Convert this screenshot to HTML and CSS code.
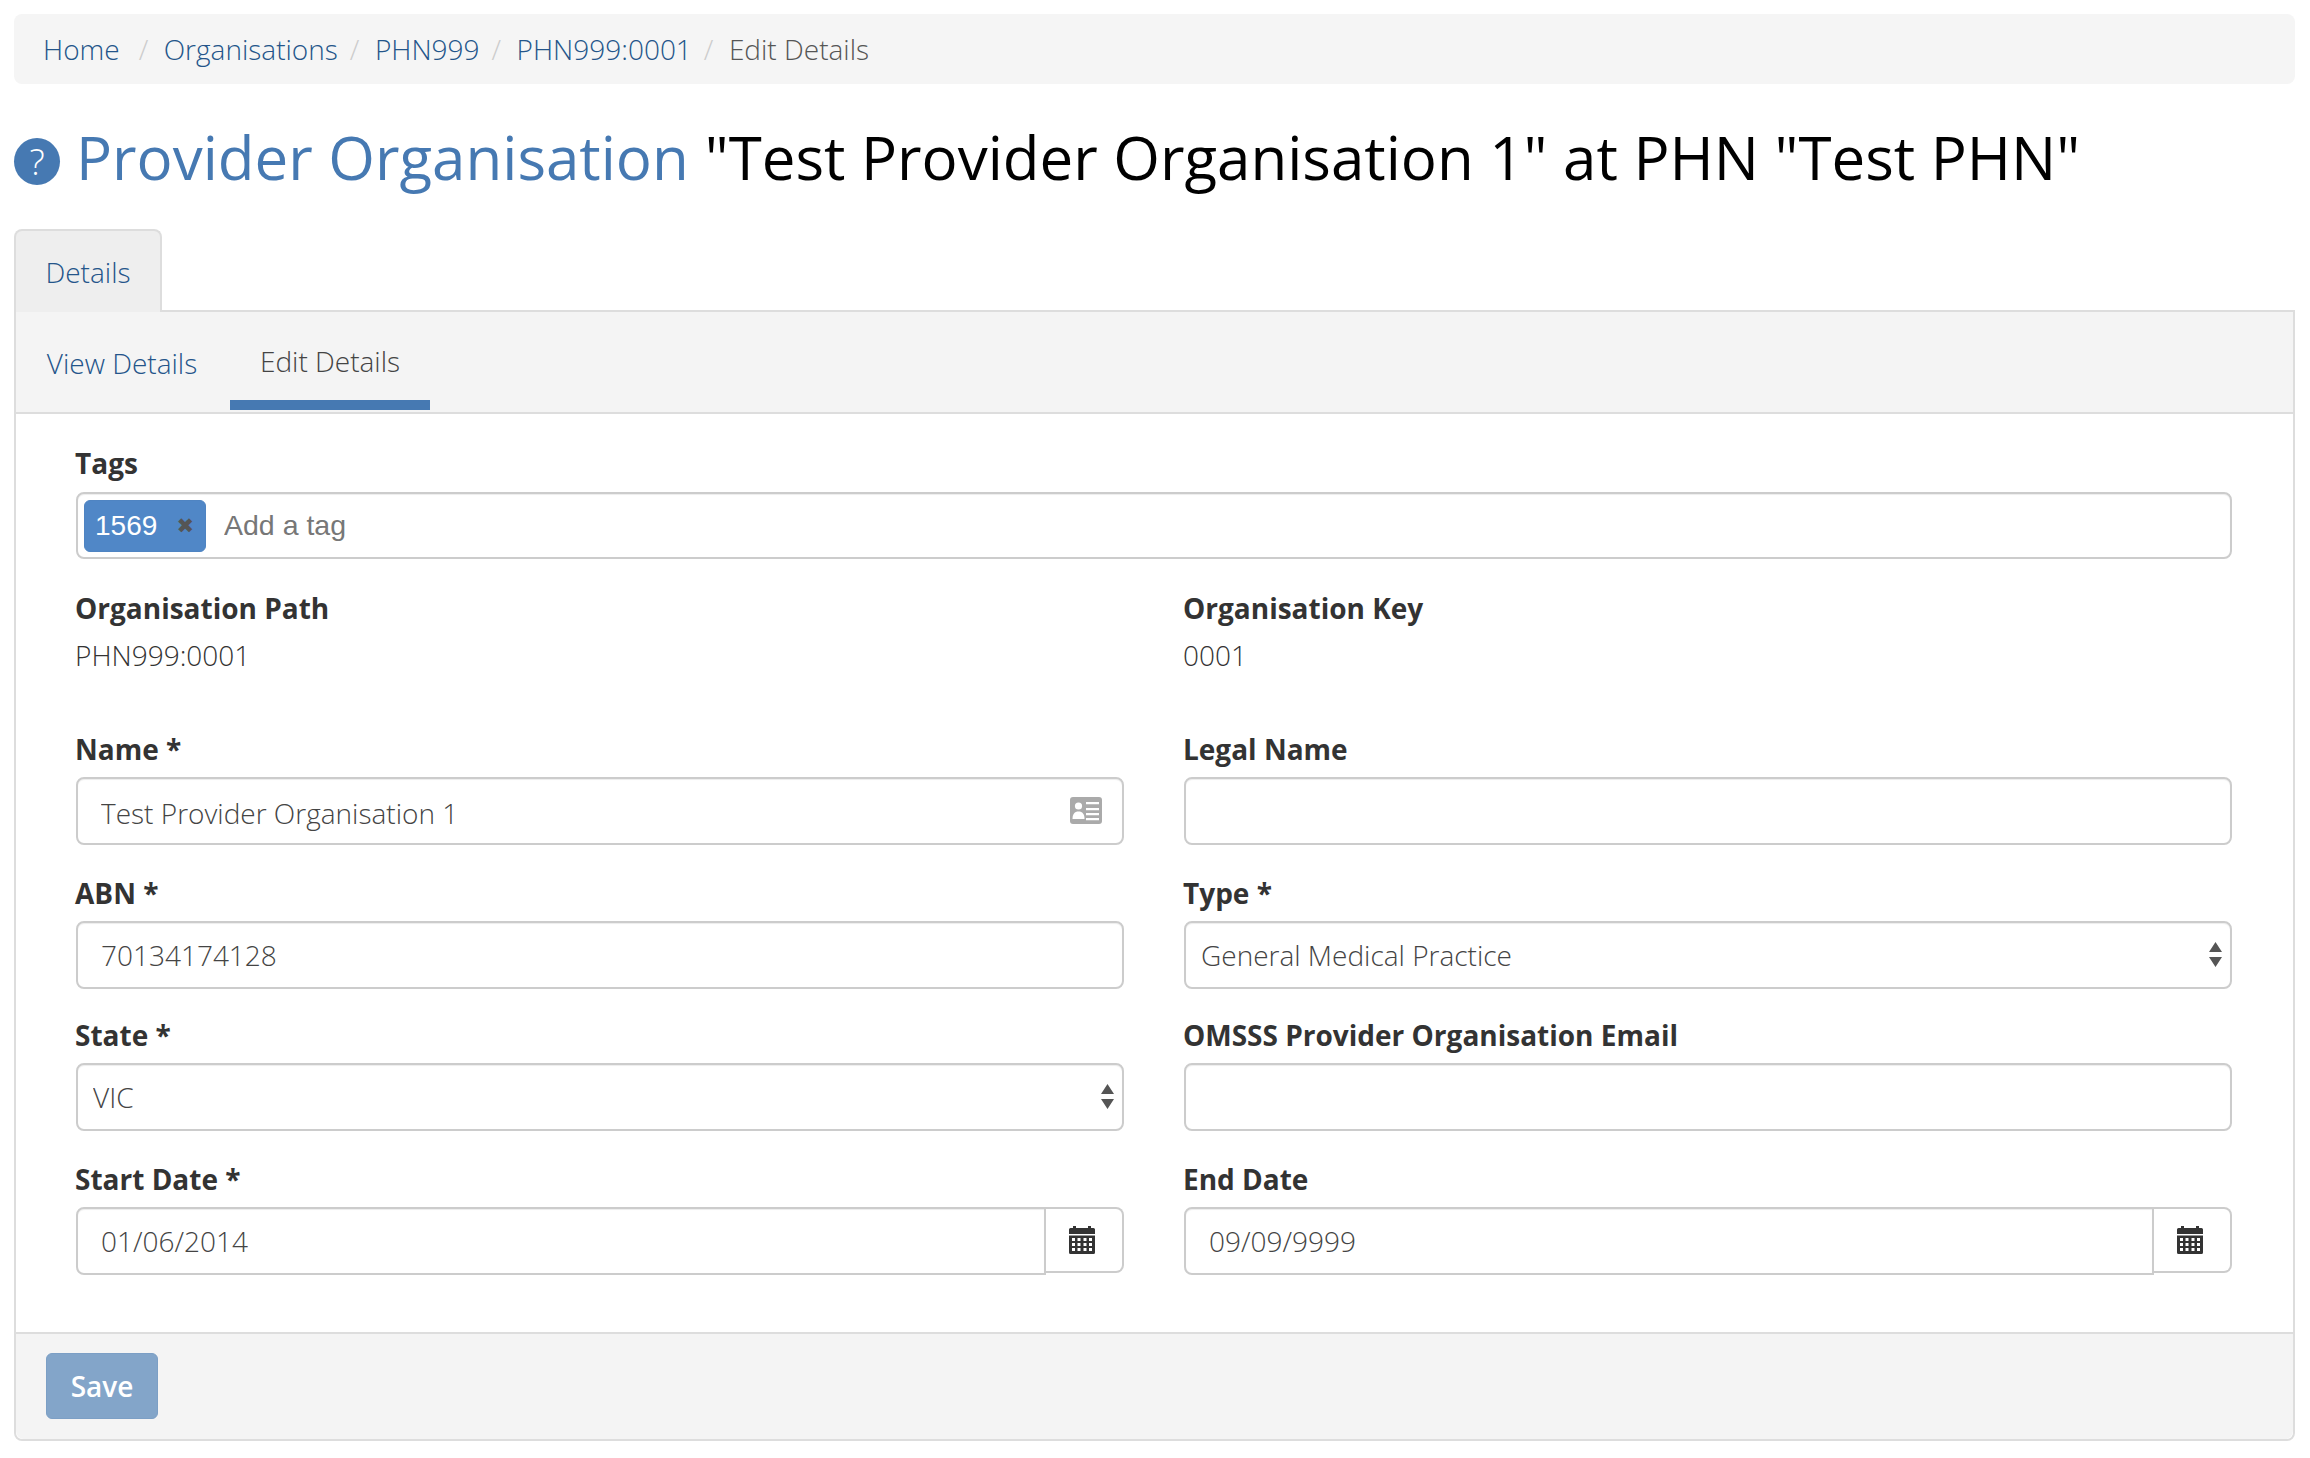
FILE: index.html
```html
<!DOCTYPE html>
<html lang="en">
<head>
  <meta charset="UTF-8">
  <title>Edit Details</title>
  <link rel="stylesheet" href="styles.css">
</head>
<body>
  <ol class="breadcrumb">
    <li class="first"><a href="#">Home</a></li>
    <li><a href="#">Organisations</a></li>
    <li><a href="#">PHN999</a></li>
    <li><a href="#">PHN999:0001</a></li>
    <li class="active">Edit Details</li>
  </ol>

  <h1 class="title">
    <span class="help">?</span>
    <a href="#">Provider Organisation</a>
    <span>"Test Provider Organisation 1" at PHN "Test PHN"</span>
  </h1>

  <div class="tabs">
    <a class="tab" href="#">Details</a>
  </div>

  <div class="panel">
    <div class="subnav">
      <a class="subnav-item" href="#">View Details</a>
      <a class="subnav-item current" href="#">Edit Details</a>
    </div>

    <form class="panel-body">
      <label class="label label-tags">Tags</label>
      <div class="tag-input">
        <span class="tag">1569 <span class="tag-x">&#10006;</span></span>
        <input class="tag-field" type="text" placeholder="Add a tag">
      </div>

      <div class="row row-static">
        <div>
          <label class="label">Organisation Path</label>
          <p class="static">PHN999:0001</p>
        </div>
        <div>
          <label class="label">Organisation Key</label>
          <p class="static">0001</p>
        </div>
      </div>

      <div class="row row-a">
        <div>
          <label class="label">Name *</label>
          <div class="control-wrap">
            <input class="control control-name" type="text" value="Test Provider Organisation 1">
            <svg class="card-icon" viewBox="0 0 32 27" width="32" height="27">
              <rect width="32" height="27" rx="3" fill="#aaa"/>
              <circle cx="8.5" cy="9" r="3.6" fill="#fff"/>
              <path d="M2.5 22c0-5 2-7.500 6-7.500s6 2.500 6 7.500z" fill="#fff"/>
              <path d="M16 5h13v2.200H16zM16 11h13v2.200H16zM16 16h13v2.200H16zM16 21h13v2.200H16z" fill="#fff"/>
            </svg>
          </div>
        </div>
        <div>
          <label class="label">Legal Name</label>
          <input class="control" type="text">
        </div>
      </div>

      <div class="row row-b">
        <div>
          <label class="label">ABN *</label>
          <input class="control" type="text" value="70134174128">
        </div>
        <div>
          <label class="label">Type *</label>
          <div class="control-wrap">
            <select class="control select">
              <option>General Medical Practice</option>
            </select>
            <svg class="select-arrows" viewBox="0 0 13 25" width="13" height="25">
              <path d="M6.500 0L13 10H0zM0 15h13L6.500 25z" fill="#555"/>
            </svg>
          </div>
        </div>
      </div>

      <div class="row row-c">
        <div>
          <label class="label">State *</label>
          <div class="control-wrap">
            <select class="control select">
              <option>VIC</option>
            </select>
            <svg class="select-arrows" viewBox="0 0 13 25" width="13" height="25">
              <path d="M6.500 0L13 10H0zM0 15h13L6.500 25z" fill="#555"/>
            </svg>
          </div>
        </div>
        <div>
          <label class="label">OMSSS Provider Organisation Email</label>
          <input class="control" type="text">
        </div>
      </div>

      <div class="row row-d">
        <div>
          <label class="label">Start Date *</label>
          <div class="date-group">
            <input class="control date" type="text" value="01/06/2014">
            <span class="addon">
              <svg viewBox="0 0 26 28" width="26" height="28"><path fill-rule="evenodd" fill="#333" d="M4 0h3v2h12V0h3v2h2.500A1.500 1.500 0 0 1 26 3.500V8H0V3.500A1.500 1.500 0 0 1 1.500 2H4zM0 9.500h26V26.500A1.500 1.500 0 0 1 24.500 28H1.500A1.500 1.500 0 0 1 0 26.500zM3 12v3h3v-3zM8.500 12v3h3v-3zM14.500 12v3h3v-3zM20 12v3h3v-3zM3 17v3h3v-3zM8.500 17v3h3v-3zM14.500 17v3h3v-3zM20 17v3h3v-3zM3 22v3h3v-3zM8.500 22v3h3v-3zM14.500 22v3h3v-3zM20 22v3h3v-3z"/></svg>
            </span>
          </div>
        </div>
        <div>
          <label class="label">End Date</label>
          <div class="date-group">
            <input class="control date" type="text" value="09/09/9999">
            <span class="addon">
              <svg viewBox="0 0 26 28" width="26" height="28"><path fill-rule="evenodd" fill="#333" d="M4 0h3v2h12V0h3v2h2.500A1.500 1.500 0 0 1 26 3.500V8H0V3.500A1.500 1.500 0 0 1 1.500 2H4zM0 9.500h26V26.500A1.500 1.500 0 0 1 24.500 28H1.500A1.500 1.500 0 0 1 0 26.500zM3 12v3h3v-3zM8.500 12v3h3v-3zM14.500 12v3h3v-3zM20 12v3h3v-3zM3 17v3h3v-3zM8.500 17v3h3v-3zM14.500 17v3h3v-3zM20 17v3h3v-3zM3 22v3h3v-3zM8.500 22v3h3v-3zM14.500 22v3h3v-3zM20 22v3h3v-3z"/></svg>
            </span>
          </div>
        </div>
      </div>
    </form>

    <div class="panel-footer">
      <button class="save" type="button">Save</button>
    </div>
  </div>
</body>
</html>
```

FILE: styles.css
```css
* {
  box-sizing: border-box;
}
body {
  margin: 0;
  padding: 14px 15px 0 14px;
  background-color: white;
  color: #333;
  font-family: "Open Sans", sans-serif;
  font-size: 28px;
  font-weight: 300;
}
a {
  color: #24558a;
  text-decoration: none;
}

.breadcrumb {
  display: flex;
  align-items: center;
  height: 70px;
  margin: 0;
  padding: 0 29px;
  list-style: none;
  background-color: #f5f5f5;
  border-radius: 8px;
}
.breadcrumb li + li::before {
  content: "/";
  padding: 0 15.500px 0 12px;
  color: #ccc;
}
.breadcrumb .first {
  margin-right: 7px;
}
.breadcrumb .active {
  color: #555;
}

.title {
  display: flex;
  align-items: center;
  height: 62px;
  margin: 42px 0 0;
  color: #000;
  font-size: 60px;
  font-weight: 400;
}
.title a {
  margin: 0 16px 0 16px;
  color: #4679b2;
}
.help {
  display: flex;
  flex: none;
  align-items: center;
  justify-content: center;
  width: 46px;
  height: 47px;
  margin-top: 8px;
  border-radius: 50%;
  background-color: #4679b2;
  color: white;
  font-size: 36px;
  font-weight: 300;
}

.tabs {
  display: flex;
  margin-top: 41px;
}
.tab {
  display: flex;
  align-items: center;
  justify-content: center;
  width: 148px;
  height: 83px;
  margin-bottom: -2px;
  border: 2px solid #ddd;
  border-bottom: none;
  border-radius: 8px 8px 0 0;
  background-color: #eee;
  position: relative;
}

.panel {
  border: 2px solid #ddd;
  border-radius: 0 0 8px 8px;
}
.subnav {
  display: flex;
  height: 102px;
  border-bottom: 2px solid #ddd;
  background-color: #f4f4f4;
}
.subnav-item {
  display: flex;
  align-items: center;
  justify-content: center;
  height: 98px;
  padding: 3px 0 0 29px;
  width: 183px;
}
.subnav-item.current {
  width: 200px;
  margin-left: 31px;
  padding: 10px 0 0;
  border-bottom: 10px solid #4679b2;
  color: #444;
}

.panel-body {
  padding: 30px 61px 57px 60px;
}
.label {
  display: block;
  height: 38px;
  margin-left: -1px;
  line-height: 38px;
  color: #333;
  font-weight: 700;
}
.tag-input {
  display: flex;
  align-items: center;
  height: 67px;
  margin-top: 10px;
  padding: 0 6px;
  border: 2px solid #ccc;
  border-radius: 8px;
  box-shadow: inset 0 1px 1px rgba(0, 0, 0, .075);
}
.tag {
  display: flex;
  align-items: center;
  justify-content: space-between;
  width: 122px;
  height: 52px;
  padding: 0 11px 0 10px;
  border: 1px solid #4f84c2;
  border-radius: 6px;
  background-color: #5087c7;
  color: white;
  font-family: "Liberation Sans", sans-serif;
  font-size: 28px;
  font-weight: 400;
}
.tag-x {
  color: #555;
  font-size: 21px;
  font-family: "DejaVu Sans", sans-serif;
}
.tag-field {
  flex: 1;
  margin-left: 16px;
  border: none;
  outline: none;
  background: none;
  font-family: "Liberation Sans", sans-serif;
  font-size: 28.500px;
}
.tag-field::placeholder {
  color: #777;
  opacity: 1;
}

.row {
  display: grid;
  grid-template-columns: 1048px 1048px;
  column-gap: 60px;
}
.row .label {
  margin-bottom: 9px;
}
.row-static {
  margin-top: 30px;
}
.row-a {
  margin-top: 34px;
}
.row-b {
  margin-top: 29px;
}
.row-c {
  margin-top: 27px;
}
.row-d {
  margin-top: 29px;
}
.static {
  height: 60px;
  margin: 0 0 0 -1px;
  line-height: 38px;
}

.control-wrap {
  position: relative;
}
.control {
  display: block;
  width: 100%;
  height: 68px;
  padding: 0 23px;
  border: 2px solid #ccc;
  border-radius: 8px;
  outline: none;
  background-color: white;
  box-shadow: inset 0 1px 1px rgba(0, 0, 0, .075);
  color: #444;
  font-family: "Open Sans", sans-serif;
  font-size: 28px;
  font-weight: 300;
}
.control-name {
  padding-top: 4px;
}
.select {
  padding: 0 15px;
  appearance: none;
}
.select-arrows {
  position: absolute;
  top: 21px;
  right: 10px;
}
.card-icon {
  position: absolute;
  top: 20px;
  right: 22px;
}
.date-group {
  display: flex;
}
.control.date {
  flex: 1;
  min-width: 0;
  width: auto;
  border-radius: 8px 0 0 8px;
}
.addon {
  display: flex;
  flex: none;
  align-items: center;
  justify-content: center;
  width: 78px;
  height: 66px;
  padding-right: 5px;
  border: 2px solid #ccc;
  border-left: none;
  border-radius: 0 8px 8px 0;
}

.panel-footer {
  height: 107px;
  padding: 19px 30px;
  border-top: 2px solid #ddd;
  border-radius: 0 0 8px 8px;
  background-color: #f4f4f4;
}
.save {
  width: 112px;
  height: 66px;
  border: 1px solid #7c9fc5;
  border-radius: 6px;
  background-color: #83a5c9;
  color: white;
  font-family: "Open Sans", sans-serif;
  font-size: 28px;
  font-weight: 600;
}
```
